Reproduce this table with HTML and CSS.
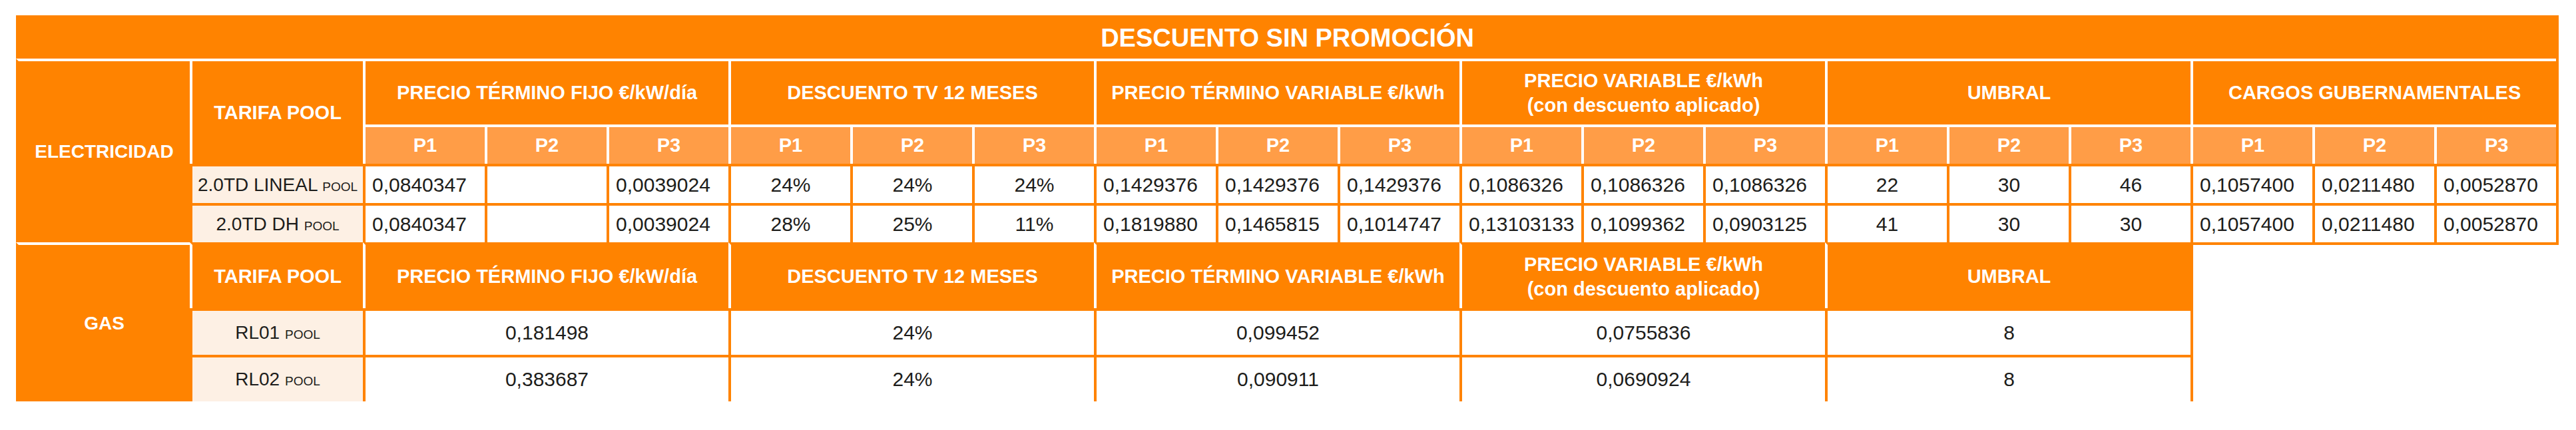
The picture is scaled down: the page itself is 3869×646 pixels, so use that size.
FILE: index.html
```html
<!DOCTYPE html>
<html lang="es">
<head>
<meta charset="utf-8">
<title>Descuento sin promoción</title>
<link rel="stylesheet" href="styles.css">
</head>
<body>
<table class="tbl">
  <colgroup>
    <col class="c-cat"><col class="c-tar">
    <col class="c-p"><col class="c-p"><col class="c-p">
    <col class="c-p"><col class="c-p"><col class="c-p">
    <col class="c-p"><col class="c-p"><col class="c-p">
    <col class="c-p"><col class="c-p"><col class="c-p">
    <col class="c-p"><col class="c-p"><col class="c-p">
    <col class="c-p"><col class="c-p"><col class="c-p">
  </colgroup>
  <tr class="r-title">
    <th class="title" colspan="20">DESCUENTO SIN PROMOCIÓN</th>
  </tr>
  <tr class="r-head">
    <th class="cat" rowspan="4">ELECTRICIDAD</th>
    <th class="hd" rowspan="2">TARIFA POOL</th>
    <th class="hd" colspan="3">PRECIO TÉRMINO FIJO €/kW/día</th>
    <th class="hd" colspan="3">DESCUENTO TV 12 MESES</th>
    <th class="hd" colspan="3">PRECIO TÉRMINO VARIABLE €/kWh</th>
    <th class="hd two" colspan="3">PRECIO VARIABLE €/kWh<br>(con descuento aplicado)</th>
    <th class="hd" colspan="3">UMBRAL</th>
    <th class="hd end" colspan="3">CARGOS GUBERNAMENTALES</th>
  </tr>
  <tr class="r-p">
    <th class="pp">P1</th><th class="pp">P2</th><th class="pp">P3</th>
    <th class="pp">P1</th><th class="pp">P2</th><th class="pp">P3</th>
    <th class="pp">P1</th><th class="pp">P2</th><th class="pp">P3</th>
    <th class="pp">P1</th><th class="pp">P2</th><th class="pp">P3</th>
    <th class="pp">P1</th><th class="pp">P2</th><th class="pp">P3</th>
    <th class="pp">P1</th><th class="pp">P2</th><th class="pp end">P3</th>
  </tr>
  <tr class="r-data">
    <td class="tar">2.0TD LINEAL <span class="pool">POOL</span></td>
    <td class="n">0,0840347</td><td class="n"></td><td class="n">0,0039024</td>
    <td class="c">24%</td><td class="c">24%</td><td class="c">24%</td>
    <td class="n">0,1429376</td><td class="n">0,1429376</td><td class="n">0,1429376</td>
    <td class="n">0,1086326</td><td class="n">0,1086326</td><td class="n">0,1086326</td>
    <td class="c">22</td><td class="c">30</td><td class="c">46</td>
    <td class="n">0,1057400</td><td class="n">0,0211480</td><td class="n end">0,0052870</td>
  </tr>
  <tr class="r-data">
    <td class="tar">2.0TD DH <span class="pool">POOL</span></td>
    <td class="n">0,0840347</td><td class="n"></td><td class="n">0,0039024</td>
    <td class="c">28%</td><td class="c">25%</td><td class="c">11%</td>
    <td class="n">0,1819880</td><td class="n">0,1465815</td><td class="n">0,1014747</td>
    <td class="n">0,13103133</td><td class="n">0,1099362</td><td class="n">0,0903125</td>
    <td class="c">41</td><td class="c">30</td><td class="c">30</td>
    <td class="n under">0,1057400</td><td class="n under">0,0211480</td><td class="n end-under">0,0052870</td>
  </tr>
  <tr class="r-head">
    <th class="cat bottom" rowspan="3">GAS</th>
    <th class="hd gh">TARIFA POOL</th>
    <th class="hd gh" colspan="3">PRECIO TÉRMINO FIJO €/kW/día</th>
    <th class="hd gh" colspan="3">DESCUENTO TV 12 MESES</th>
    <th class="hd gh" colspan="3">PRECIO TÉRMINO VARIABLE €/kWh</th>
    <th class="hd gh two" colspan="3">PRECIO VARIABLE €/kWh<br>(con descuento aplicado)</th>
    <th class="hd gh end" colspan="3">UMBRAL</th>
  </tr>
  <tr class="r-gas">
    <td class="tar">RL01 <span class="pool">POOL</span></td>
    <td class="c" colspan="3">0,181498</td>
    <td class="c" colspan="3">24%</td>
    <td class="c" colspan="3">0,099452</td>
    <td class="c" colspan="3">0,0755836</td>
    <td class="c end" colspan="3">8</td>
  </tr>
  <tr class="r-gas">
    <td class="tar under">RL02 <span class="pool">POOL</span></td>
    <td class="c under" colspan="3">0,383687</td>
    <td class="c under" colspan="3">24%</td>
    <td class="c under" colspan="3">0,090911</td>
    <td class="c under" colspan="3">0,0690924</td>
    <td class="c end-under" colspan="3">8</td>
  </tr>
</table>
</body>
</html>
```

FILE: styles.css
```css
html, body {
  margin: 0;
  padding: 0;
  background: #ffffff;
}

body {
  padding: 23px 0 0 24px;
  font-family: "Liberation Sans", Arial, sans-serif;
}

.tbl {
  border-collapse: separate;
  border-spacing: 0;
  table-layout: fixed;
  width: 3815px;
}

.c-cat { width: 261px; }
.c-tar { width: 260px; }
.c-p { width: 183px; }

.r-title { height: 65px; }
.r-head { height: 99px; }
.r-p { height: 59px; }
.r-data { height: 59px; }
.r-gas { height: 70px; }

.tbl th,
.tbl td {
  box-sizing: border-box;
  padding: 0;
  border-left: 4px solid #ff8300;
  border-top: 4px solid #ff8300;
  vertical-align: middle;
  text-align: center;
  line-height: 1.2;
  white-space: nowrap;
  overflow: hidden;
}

.title {
  background: #ff8300;
  color: #ffffff;
  font-size: 38px;
  font-weight: 700;
  box-shadow: 4px 0 0 #ff8300;
}

.cat {
  background: #ff8300;
  color: #ffffff;
  font-size: 28px;
  font-weight: 700;
  border-top-color: #ffffff !important;
}

.cat.bottom {
  box-shadow: 0 4px 0 #ff8300;
}

.hd {
  background: #ff8300;
  color: #ffffff;
  font-size: 29px;
  font-weight: 700;
  border-left-color: #ffffff !important;
  border-top-color: #ffffff !important;
}

.hd.gh {
  border-top-color: #ff8300 !important;
}

.hd.two {
  line-height: 1.25;
}

.pp {
  background: #ff9d47;
  color: #ffffff;
  font-size: 29px;
  font-weight: 700;
  border-left-color: #ffffff !important;
  border-top-color: #ffffff !important;
}

.tar {
  background: #fdf0e4;
  color: #1d1d1b;
  font-size: 28px;
}

.pool {
  font-size: 19px;
}

.n,
.c {
  background: #ffffff;
  color: #1d1d1b;
  font-size: 30px;
}

.n {
  text-align: left !important;
  padding-left: 10px !important;
}

.end {
  box-shadow: 4px 0 0 #ff8300;
}

.under {
  box-shadow: 0 4px 0 #ff8300;
}

.end-under {
  box-shadow: 4px 0 0 #ff8300, 0 4px 0 #ff8300, 4px 4px 0 #ff8300;
}
```
